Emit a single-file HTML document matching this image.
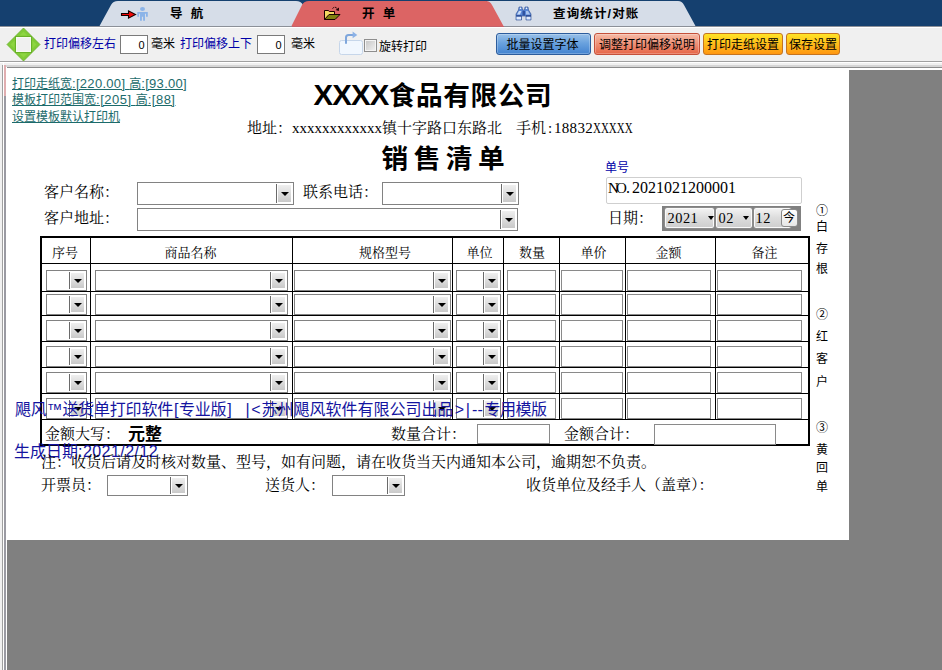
<!DOCTYPE html>
<html lang="zh-CN">
<head>
<meta charset="utf-8">
<title>销售清单 - 开单</title>
<style>
html,body{margin:0;padding:0;}
body{width:942px;height:670px;overflow:hidden;position:relative;background:#808080;
 font-family:"Liberation Sans","Noto Sans CJK SC",sans-serif;font-size:12px;color:#000;}
.a{position:absolute;white-space:nowrap;line-height:1;}
.ui{font-family:"Liberation Sans","Noto Sans CJK SC",sans-serif;font-size:12px;}
.song{font-family:"Liberation Serif","Noto Serif CJK SC",serif;}
.blue{color:#0000a8;}
/* tab bar */
#tabbar{position:absolute;left:0;top:0;width:942px;height:26px;background:#15406f;}
#tabsvg{position:absolute;left:0;top:0;}
.tabt{font-weight:bold;font-size:12.5px;letter-spacing:1.15px;}
/* toolbar */
#toolbar{position:absolute;left:0;top:26px;width:942px;height:35px;background:#f0f0f0;border-top:1px solid #8c9098;box-sizing:border-box;}
#toolbar:before{content:"";position:absolute;left:0;top:0;width:100%;height:1px;background:#fff;}
.tin{position:absolute;box-sizing:border-box;border:1px solid #7a7a7a;background:#fff;height:19px;width:28px;top:35px;}
.btn{position:absolute;top:33px;height:22px;box-sizing:border-box;border-radius:3px;border:1px solid #555;}
.btn span{position:absolute;top:5px;left:0;width:100%;text-align:center;line-height:12px;font-size:12px;white-space:nowrap;}
/* frame */
.ln{position:absolute;}
#paper{position:absolute;left:6px;top:68px;width:843px;height:472px;background:#fff;}
/* combos */
.cb{position:absolute;box-sizing:border-box;border:1px solid #828282;background:#fff;}
.cb i{position:absolute;right:2px;top:2px;bottom:2px;width:13px;background:linear-gradient(#efefef,#c9c9c9);border-left:1px solid #fff;}
.cb i:before{content:"";position:absolute;left:-2px;top:-1px;bottom:-1px;width:1px;background:#6a6a6a;}
.cb i:after{content:"";position:absolute;left:3px;top:50%;margin-top:-2px;border-left:4px solid transparent;border-right:4px solid transparent;border-top:4px solid #000;}
.ip{position:absolute;box-sizing:border-box;border:1px solid #8a8a8a;background:#fff;}
/* table lines */
.bl{position:absolute;background:#000;}
.th{font-size:13px;}
.f15{font-size:15px;}
.mono{font-family:"Liberation Mono",monospace;}
.f15 .mono{letter-spacing:-1.2px;}
.lnk{color:#1c6b6b;text-decoration:underline;font-size:13px;}
.lnk b{font-weight:normal;font-size:12px;letter-spacing:0;}
.wm u{display:inline-block;text-decoration:none;text-align:center;}
.wm{color:#1414a0;font-size:16px;font-family:"Liberation Sans","Noto Sans CJK SC",sans-serif;}
.side{font-size:12px;left:816px;}
</style>
</head>
<body>
<!-- TAB BAR -->
<div id="tabbar"></div>
<svg id="tabsvg" width="942" height="27" viewBox="0 0 942 27">
  <path d="M99.500,26 L111,5 Q113,1 118,1 L296,1 Q301,1 303,5 L314,26 Z" fill="#d6dde8"/>
  <path d="M487,26 L487,1 L678,1 Q682,1 684,5 L695.500,26 Z" fill="#d6dde8"/>
  <path d="M291.500,26 L302,5 Q304,1 309,1 L486,1 Q490,1 492,5 L503.500,26 Z" fill="#dc6464"/>
  <rect x="0" y="0" width="942" height="1" fill="#15406f" opacity="0.550"/>
  <!-- nav icon: arrow + person -->
  <path d="M121.500,13.500 H128.500 V10.800 L135.500,14.500 L128.500,18.200 V15.500 H121.500 Z" fill="#f40808" stroke="#140000" stroke-width="1.100" stroke-linejoin="miter"/>
  <ellipse cx="142.500" cy="8.900" rx="2.500" ry="2" fill="#8cb4e8"/>
  <path d="M137.300,12 H147.800 V16.800 H146 V13.800 H145 V20.800 H143.100 V16.800 H141.900 V20.800 H140 V13.800 H139 V16.800 H137.300 Z" fill="#8cb4e8"/>
  <!-- folder icon -->
  <path d="M325,11 H328 L329,12 H334 V14.500 H329 L325,19 Z" fill="#f3da62"/>
  <path d="M324.500,19.500 V10.500 H328.500 L329.500,11.500 H334.500 V14.500" fill="none" stroke="#1c0000" stroke-width="1"/>
  <path d="M324.500,19.500 L329,14.500 H340 L335,19.500 Z" fill="#808010" stroke="#1c0000" stroke-width="1" stroke-linejoin="miter"/>
  <path d="M332.500,8.500 Q335,5.800 337.500,9" fill="none" stroke="#1c0000" stroke-width="1" stroke-dasharray="2 0.800"/>
  <path d="M339,7.500 L338.800,11 L335.600,10 Z" fill="#1c0000"/>
  <!-- binoculars -->
  <path d="M519,7 H522 L522.500,10 H524.500 L525,7 H528 L528.500,10 L531,14 V20 H526 V16 H521.500 V20 H516 V14 L518.500,10 Z" fill="#5a88d6" stroke="#2a488c" stroke-width="0.600"/>
  <rect x="516.500" y="16.500" width="4.500" height="3" fill="#dfe9fb"/>
  <rect x="526.500" y="16.500" width="4" height="3" fill="#dfe9fb"/>
  <rect x="516.300" y="15.300" width="5.200" height="1.200" fill="#1e3a80"/>
  <rect x="526" y="15.300" width="5" height="1.200" fill="#1e3a80"/>
  <rect x="519.800" y="7.600" width="1.400" height="1.400" fill="#eef3fd"/>
  <rect x="525.800" y="7.600" width="1.400" height="1.400" fill="#eef3fd"/>
  <path d="M517,14.500 L519,11 H521.500 L520,14.500 Z" fill="#c9dbf6"/>
  <path d="M526,14.500 L526,11 H528 L530,14.500 Z" fill="#a9c4ee"/>
  <rect x="522.500" y="11" width="2.500" height="4.500" fill="#2f52a0"/>
</svg>
<div class="a tabt" style="left:170px;top:8px;word-spacing:2.5px;">导 航</div>
<div class="a tabt" style="left:362px;top:8px;word-spacing:2.5px;">开 单</div>
<div class="a tabt" style="left:553px;top:8px;">查询统计/对账</div>

<!-- TOOLBAR -->
<div id="toolbar"></div>
<div class="ln" style="left:292px;top:26px;width:212px;height:1px;background:#c4626a;"></div>
<svg class="a" style="left:6px;top:27px;" width="36" height="36" viewBox="0 0 36 36">
  <path d="M17.500,1 L34,17.500 L17.500,34 L1,17.500 Z" fill="#80cb36" stroke="#66ad2a" stroke-width="0.800"/>
  <path d="M17.500,4.500 L21.500,8.500 H13.500 Z M17.500,30.500 L21.500,26.500 H13.500 Z M4.500,17.500 L8.500,13.500 V21.500 Z M30.500,17.500 L26.500,13.500 V21.500 Z" fill="#93d846" opacity="0.700"/>
  <rect x="9" y="9" width="17" height="17" fill="#69b128"/>
  <rect x="10" y="10" width="15" height="15" fill="#f6fbef"/>
  <rect x="11" y="11" width="13" height="13" fill="#f0f0f0"/>
</svg>
<div class="a ui blue" style="left:44px;top:38px;">打印偏移左右</div>
<div class="tin"  style="left:120px;"></div>
<div class="a ui" style="left:138.5px;top:40px;font-size:11px;">0</div>
<div class="a ui" style="left:151px;top:38px;">毫米</div>
<div class="a ui blue" style="left:180px;top:38px;">打印偏移上下</div>
<div class="tin"  style="left:257px;"></div>
<div class="a ui" style="left:275.5px;top:40px;font-size:11px;">0</div>
<div class="a ui" style="left:291px;top:38px;">毫米</div>
<svg class="a" style="left:338px;top:30px;" width="27" height="27" viewBox="0 0 27 27">
  <rect x="1.500" y="10.500" width="23" height="14" rx="2" fill="#f1f7fe" stroke="#c6d6ea"/>
  <path d="M8,13.800 V7.500 Q8,5 10.500,5 H15" fill="none" stroke="#7ea6dc" stroke-width="2"/>
  <path d="M14.600,1.600 L19.300,4.900 L14.600,8.200 Z" fill="#8cb2e6"/>
</svg>
<div class="a" style="left:364px;top:39px;width:13px;height:13px;box-sizing:border-box;border:1px solid #8e8e8e;background:linear-gradient(135deg,#c4c4c4,#f2f2f2);box-shadow:inset 0 0 0 1px #f4f4f4;"></div>
<div class="a ui" style="left:379px;top:41px;">旋转打印</div>

<div class="btn" style="left:496px;width:95px;background:linear-gradient(#98c0e8,#6aa2de 45%,#4383d0);border-color:#2c5c9c;box-shadow:inset 0 0 0 1px rgba(255,255,255,.25);"><span style="left:-1px">批量设置字体</span></div>
<div class="btn" style="left:594px;width:106px;background:linear-gradient(#f6bba6,#e66446);border-color:#c4503a;box-shadow:inset 0 0 0 1px rgba(255,255,255,.25);"><span>调整打印偏移说明</span></div>
<div class="btn" style="left:703px;width:80px;background:linear-gradient(#ffe426,#ff9610);border-color:#c47420;"><span>打印走纸设置</span></div>
<div class="btn" style="left:786px;width:54px;background:linear-gradient(#ffe426,#ff9610);border-color:#c47420;"><span>保存设置</span></div>

<!-- FRAME LINES -->
<div class="ln" style="left:0;top:61px;width:942px;height:1px;background:#a0a0a0;"></div>
<div class="ln" style="left:0;top:62px;width:942px;height:1px;background:#fff;"></div>
<div class="ln" style="left:0;top:63px;width:942px;height:2px;background:#f0f0f0;"></div>
<div class="ln" style="left:0;top:65px;width:942px;height:2px;background:#d6d6d6;"></div>
<div class="ln" style="left:0;top:67px;width:942px;height:1px;background:#8c8c8c;"></div>
<div class="ln" style="left:0;top:68px;width:942px;height:2px;background:#fff;"></div>
<div class="ln" style="left:0;top:63px;width:2px;height:607px;background:#f0f0f0;"></div>
<div class="ln" style="left:2px;top:65px;width:1px;height:605px;background:#a0a0a0;"></div>
<div class="ln" style="left:3px;top:63px;width:1px;height:607px;background:#fff;"></div>
<div class="ln" style="left:4px;top:65px;width:2px;height:605px;background:#9a9aa2;"></div>
<div class="ln" style="left:6px;top:67px;width:1px;height:603px;background:#fff;"></div>
<div class="ln" style="left:4px;top:65px;width:2px;height:31px;background:#e0aeb0;"></div>
<div id="paper"></div>

<!-- PAPER CONTENT -->
<div class="a lnk" style="left:12px;top:77px;letter-spacing:0.3px;"><b>打印走纸宽</b>:[220.00] <b>高</b>:[93.00]</div>
<div class="a lnk" style="left:12px;top:93px;letter-spacing:0.5px;"><b>模板打印范围宽</b>:[205] <b>高</b>:[88]</div>
<div class="a lnk" style="left:12px;top:110px;"><b>设置模板默认打印机</b></div>

<div class="a" id="title" style="left:313.5px;top:83px;letter-spacing:0.6px;font-size:26.67px;font-weight:bold;font-family:'Liberation Sans','Noto Sans CJK SC',sans-serif;"><span style="font-size:29.3px;letter-spacing:-0.75px;line-height:0;">XXXX</span>食品有限公司</div>
<div class="a song f15" id="addr1" style="left:247px;top:121px;">地址：xxxxxxxxxxxx镇十字路口东路北</div>
<div class="a song f15" id="addr2" style="left:516px;top:121px;">手机<span style="display:inline-block;width:8px;text-align:center;">:</span><span style="letter-spacing:0.3px;">18832</span><span style="display:inline-block;transform:scaleX(.73);transform-origin:0 50%;">XXXXX</span></div>
<div class="a" id="title2" style="left:381.5px;top:146px;font-size:26.67px;font-weight:bold;word-spacing:-1.9px;">销 售 清 单</div>

<div class="a song f15" style="left:44px;top:185px;">客户名称：</div>
<div class="cb" style="left:137px;top:182px;width:157px;height:23px;"><i></i></div>
<div class="a song f15" style="left:303px;top:185px;">联系电话：</div>
<div class="cb" style="left:382px;top:182px;width:137px;height:23px;"><i></i></div>
<div class="a song f15" style="left:44px;top:211px;">客户地址：</div>
<div class="cb" style="left:137px;top:208px;width:381px;height:23px;"><i></i></div>

<div class="a ui blue" style="left:605px;top:162px;">单号</div>
<div class="ip" style="left:606px;top:177px;width:196px;height:27px;border-color:#cfcfcf;border-radius:2px;"></div>
<div class="a song" id="no" style="left:608px;top:180px;font-size:16px;"><span style="font-size:15px;letter-spacing:-2.8px">NO</span><span style="display:inline-block;width:8px;text-indent:2px;">.</span>2021021200001</div>
<div class="a song f15" style="left:608px;top:211px;">日期：</div>
<!-- date picker -->
<div class="a" style="left:662px;top:206px;width:139px;height:25px;background:#808080;"></div>
<div class="a dp" style="left:664px;top:207px;width:51px;height:22px;box-sizing:border-box;border:1px solid #8c8c8c;border-radius:3px;background:linear-gradient(#f4f4f4,#dcdcdc 50%,#cdcdcd);box-shadow:inset 0 0 0 1px #fafafa;"></div>
<div class="a dp" style="left:715px;top:207px;width:38px;height:22px;box-sizing:border-box;border:1px solid #8c8c8c;border-radius:3px;background:linear-gradient(#f4f4f4,#dcdcdc 50%,#cdcdcd);box-shadow:inset 0 0 0 1px #fafafa;"></div>
<div class="a dp" style="left:753px;top:207px;width:39px;height:22px;box-sizing:border-box;border:1px solid #8c8c8c;border-radius:3px;background:linear-gradient(#f4f4f4,#dcdcdc 50%,#cdcdcd);box-shadow:inset 0 0 0 1px #fafafa;"></div>
<div class="a" style="left:781px;top:209px;width:17px;height:18px;box-sizing:border-box;border:1px solid #8a8a8a;border-radius:3px;background:linear-gradient(#ffffff,#e6e6e6);"></div>
<div class="a song" style="left:667.5px;top:211px;font-size:14.4px;letter-spacing:0.5px;">2021</div>
<div class="a song" style="left:718.5px;top:211px;font-size:14.4px;letter-spacing:0.5px;">02</div>
<div class="a song" style="left:755.5px;top:211px;font-size:14.4px;letter-spacing:0.5px;">12</div>
<div class="a ui" style="left:783px;top:212px;font-size:12px;">今</div>
<div class="a" style="left:708px;top:216px;border-left:3.5px solid transparent;border-right:3.5px solid transparent;border-top:4px solid #000;"></div>
<div class="a" style="left:743px;top:216px;border-left:3.5px solid transparent;border-right:3.5px solid transparent;border-top:4px solid #000;"></div>

<!-- side labels -->
<div class="a ui side" style="top:205px;">①</div>
<div class="a ui side" style="top:221px;">白</div>
<div class="a ui side" style="top:243px;">存</div>
<div class="a ui side" style="top:263px;">根</div>
<div class="a ui side" style="top:309px;">②</div>
<div class="a ui side" style="top:331px;">红</div>
<div class="a ui side" style="top:353px;">客</div>
<div class="a ui side" style="top:375.5px;">户</div>
<div class="a ui side" style="top:422px;">③</div>
<div class="a ui side" style="top:443.5px;">黄</div>
<div class="a ui side" style="top:461.5px;">回</div>
<div class="a ui side" style="top:480.5px;">单</div>

<!-- TABLE -->
<div id="tbl">
<div class="bl" style="left:40px;top:236px;width:770px;height:2px;"></div>
<div class="bl" style="left:40px;top:444px;width:770px;height:2px;"></div>
<div class="bl" style="left:40px;top:236px;width:2px;height:210px;"></div>
<div class="bl" style="left:808px;top:236px;width:2px;height:210px;"></div>
<div class="bl" style="left:42px;top:263px;width:766px;height:1px;"></div>
<div class="bl" style="left:42px;top:291px;width:766px;height:1px;"></div>
<div class="bl" style="left:42px;top:315px;width:766px;height:1px;"></div>
<div class="bl" style="left:42px;top:341px;width:766px;height:1px;"></div>
<div class="bl" style="left:42px;top:367px;width:766px;height:1px;"></div>
<div class="bl" style="left:42px;top:393px;width:766px;height:1px;"></div>
<div class="bl" style="left:42px;top:419px;width:766px;height:1px;"></div>
<div class="bl" style="left:90px;top:238px;width:1px;height:182px;"></div>
<div class="bl" style="left:292px;top:238px;width:1px;height:182px;"></div>
<div class="bl" style="left:452px;top:238px;width:1px;height:182px;"></div>
<div class="bl" style="left:503px;top:238px;width:1px;height:182px;"></div>
<div class="bl" style="left:559px;top:238px;width:1px;height:182px;"></div>
<div class="bl" style="left:625px;top:238px;width:1px;height:182px;"></div>
<div class="bl" style="left:715px;top:238px;width:1px;height:182px;"></div>
<div class="a song th" style="left:25px;width:80px;text-align:center;top:246px;">序号</div>
<div class="a song th" style="left:150.5px;width:80px;text-align:center;top:246px;">商品名称</div>
<div class="a song th" style="left:345px;width:80px;text-align:center;top:246px;">规格型号</div>
<div class="a song th" style="left:439.5px;width:80px;text-align:center;top:246px;">单位</div>
<div class="a song th" style="left:492px;width:80px;text-align:center;top:246px;">数量</div>
<div class="a song th" style="left:553.5px;width:80px;text-align:center;top:246px;">单价</div>
<div class="a song th" style="left:628.5px;width:80px;text-align:center;top:246px;">金额</div>
<div class="a song th" style="left:724.5px;width:80px;text-align:center;top:246px;">备注</div>
<div class="cb" style="left:46px;top:270px;width:41px;height:21px;"><i></i></div>
<div class="cb" style="left:95px;top:270px;width:193px;height:21px;"><i></i></div>
<div class="cb" style="left:294px;top:270px;width:157px;height:21px;"><i></i></div>
<div class="cb" style="left:456px;top:270px;width:45px;height:21px;"><i></i></div>
<div class="ip" style="left:507px;top:270px;width:49px;height:21px;"></div>
<div class="ip" style="left:561px;top:270px;width:62px;height:21px;"></div>
<div class="ip" style="left:627px;top:270px;width:84px;height:21px;"></div>
<div class="ip" style="left:717px;top:270px;width:85px;height:21px;"></div>
<div class="cb" style="left:46px;top:294px;width:41px;height:21px;"><i></i></div>
<div class="cb" style="left:95px;top:294px;width:193px;height:21px;"><i></i></div>
<div class="cb" style="left:294px;top:294px;width:157px;height:21px;"><i></i></div>
<div class="cb" style="left:456px;top:294px;width:45px;height:21px;"><i></i></div>
<div class="ip" style="left:507px;top:294px;width:49px;height:21px;"></div>
<div class="ip" style="left:561px;top:294px;width:62px;height:21px;"></div>
<div class="ip" style="left:627px;top:294px;width:84px;height:21px;"></div>
<div class="ip" style="left:717px;top:294px;width:85px;height:21px;"></div>
<div class="cb" style="left:46px;top:320px;width:41px;height:21px;"><i></i></div>
<div class="cb" style="left:95px;top:320px;width:193px;height:21px;"><i></i></div>
<div class="cb" style="left:294px;top:320px;width:157px;height:21px;"><i></i></div>
<div class="cb" style="left:456px;top:320px;width:45px;height:21px;"><i></i></div>
<div class="ip" style="left:507px;top:320px;width:49px;height:21px;"></div>
<div class="ip" style="left:561px;top:320px;width:62px;height:21px;"></div>
<div class="ip" style="left:627px;top:320px;width:84px;height:21px;"></div>
<div class="ip" style="left:717px;top:320px;width:85px;height:21px;"></div>
<div class="cb" style="left:46px;top:346px;width:41px;height:21px;"><i></i></div>
<div class="cb" style="left:95px;top:346px;width:193px;height:21px;"><i></i></div>
<div class="cb" style="left:294px;top:346px;width:157px;height:21px;"><i></i></div>
<div class="cb" style="left:456px;top:346px;width:45px;height:21px;"><i></i></div>
<div class="ip" style="left:507px;top:346px;width:49px;height:21px;"></div>
<div class="ip" style="left:561px;top:346px;width:62px;height:21px;"></div>
<div class="ip" style="left:627px;top:346px;width:84px;height:21px;"></div>
<div class="ip" style="left:717px;top:346px;width:85px;height:21px;"></div>
<div class="cb" style="left:46px;top:372px;width:41px;height:21px;"><i></i></div>
<div class="cb" style="left:95px;top:372px;width:193px;height:21px;"><i></i></div>
<div class="cb" style="left:294px;top:372px;width:157px;height:21px;"><i></i></div>
<div class="cb" style="left:456px;top:372px;width:45px;height:21px;"><i></i></div>
<div class="ip" style="left:507px;top:372px;width:49px;height:21px;"></div>
<div class="ip" style="left:561px;top:372px;width:62px;height:21px;"></div>
<div class="ip" style="left:627px;top:372px;width:84px;height:21px;"></div>
<div class="ip" style="left:717px;top:372px;width:85px;height:21px;"></div>
<div class="cb" style="left:46px;top:398px;width:41px;height:21px;"><i></i></div>
<div class="cb" style="left:95px;top:398px;width:193px;height:21px;"><i></i></div>
<div class="cb" style="left:294px;top:398px;width:157px;height:21px;"><i></i></div>
<div class="cb" style="left:456px;top:398px;width:45px;height:21px;"><i></i></div>
<div class="ip" style="left:507px;top:398px;width:49px;height:21px;"></div>
<div class="ip" style="left:561px;top:398px;width:62px;height:21px;"></div>
<div class="ip" style="left:627px;top:398px;width:84px;height:21px;"></div>
<div class="ip" style="left:717px;top:398px;width:85px;height:21px;"></div>
</div><!--/tbl-->

<!-- totals row -->
<div class="a song f15" style="left:45px;top:427px;">金额大写：</div>
<div class="a" style="left:128px;top:426px;font-size:17px;font-weight:bold;">元整</div>
<div class="a song f15" style="left:391px;top:427px;">数量合计：</div>
<div class="ip" style="left:477px;top:424px;width:73px;height:20px;"></div>
<div class="a song f15" style="left:564px;top:427px;">金额合计：</div>
<div class="ip" style="left:654px;top:424px;width:122px;height:21px;"></div>

<!-- watermark -->
<div class="a wm" id="wm1" style="left:15px;top:402px;letter-spacing:-0.2px;">飓风™送货单打印软件<u style="width:6px">[</u>专业版<u style="width:6px">]</u></div>
<div class="a wm" id="wm1b" style="left:245px;top:402px;"><u style="width:5.4px">|</u><u style="width:11px">&lt;</u>苏州飓风软件有限公司出品<u style="width:12px">&gt;</u><u style="width:5px">|</u><u style="width:14px">--</u><span style="letter-spacing:-0.5px">专用模版</span></div>
<div class="a wm" id="wm2" style="left:14px;top:443.5px;">生成日期<span style="letter-spacing:0.45px">:2021/2/12</span></div>

<!-- footer -->
<div class="a song f15" id="note" style="left:41px;top:455px;">注：收货后请及时核对数量、型号，如有问题，请在收货当天内通知本公司，逾期恕不负责。</div>
<div class="a song f15" style="left:41px;top:478px;">开票员：</div>
<div class="cb" style="left:107px;top:475px;width:81px;height:21px;"><i></i></div>
<div class="a song f15" style="left:265px;top:478px;">送货人：</div>
<div class="cb" style="left:332px;top:475px;width:73px;height:21px;"><i></i></div>
<div class="a song f15" id="recv" style="left:526px;top:478px;">收货单位及经手人（盖章）：</div>
</body>
</html>
